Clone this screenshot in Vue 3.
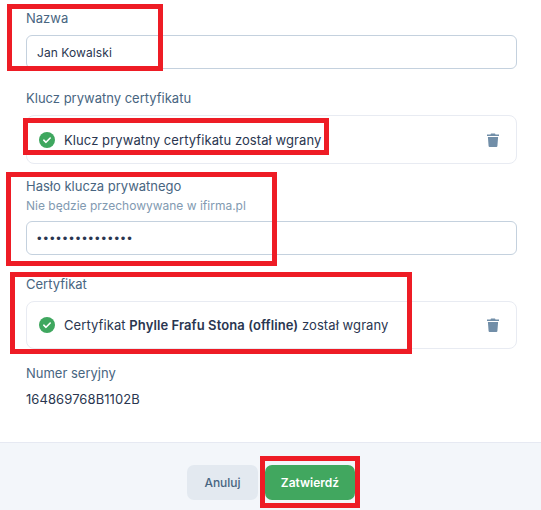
<script setup>
const marks = [
  { key: 'a', left: 7, top: 4, width: 156, height: 67 },
  { key: 'b', left: 23, top: 118, width: 306, height: 37 },
  { key: 'c', left: 6, top: 172, width: 271, height: 94 },
  { key: 'd', left: 10, top: 272, width: 402, height: 82 },
  { key: 'e', left: 260, top: 456, width: 100, height: 52 }
]
const markStyle = (m) => ({
  left: m.left + 'px',
  top: m.top + 'px',
  width: m.width + 'px',
  height: m.height + 'px'
})
</script>

<template>
  <div class="page">
    <div class="form">
      <div class="field f-name">
        <label class="label">Nazwa</label>
        <div class="input">Jan Kowalski</div>
      </div>
      <div class="field f-key">
        <label class="label">Klucz prywatny certyfikatu</label>
        <div class="file">
          <svg class="check" viewBox="0 0 16 16" width="16" height="16">
            <circle cx="8" cy="8" r="8" fill="#3fa75f" />
            <path d="M4.8 8.2l2.2 2.1 4.2-4.3" fill="none" stroke="#fff" stroke-width="1.6" stroke-linecap="round" stroke-linejoin="round" />
          </svg>
          <span class="file-text">Klucz prywatny certyfikatu został wgrany</span>
          <svg class="trash" viewBox="0 0 12 14" width="12" height="14">
            <path d="M4 .6h4l.5.9H12v1.6H0V1.500h3.500z" fill="#718ea8" />
            <path d="M.9 4.100h10.200l-.7 8.900a1 1 0 0 1-1 .9H2.600a1 1 0 0 1-1-.9z" fill="#718ea8" />
          </svg>
        </div>
      </div>
      <div class="field f-pass">
        <label class="label">Hasło klucza prywatnego</label>
        <div class="hint">Nie będzie przechowywane w ifirma.pl</div>
        <div class="input dots">•••••••••••••••</div>
      </div>
      <div class="field f-cert">
        <label class="label">Certyfikat</label>
        <div class="file">
          <svg class="check" viewBox="0 0 16 16" width="16" height="16">
            <circle cx="8" cy="8" r="8" fill="#3fa75f" />
            <path d="M4.8 8.2l2.2 2.1 4.200-4.300" fill="none" stroke="#fff" stroke-width="1.6" stroke-linecap="round" stroke-linejoin="round" />
          </svg>
          <span class="file-text">Certyfikat <b>Phylle Frafu Stona (offline)</b> został wgrany</span>
          <svg class="trash" viewBox="0 0 12 14" width="12" height="14">
            <path d="M4 .6h4l.5.9H12v1.600H0V1.500h3.500z" fill="#718ea8" />
            <path d="M.9 4.100h10.200l-.7 8.900a1 1 0 0 1-1 .9H2.600a1 1 0 0 1-1-.9z" fill="#718ea8" />
          </svg>
        </div>
      </div>
      <div class="field f-serial">
        <label class="label">Numer seryjny</label>
        <div class="value">164869768B1102B</div>
      </div>
    </div>
    <div class="footer">
      <button class="btn cancel" type="button">Anuluj</button>
      <button class="btn submit" type="button">Zatwierdź</button>
    </div>
    <div v-for="m in marks" :key="m.key" class="mark" :style="markStyle(m)"></div>
  </div>
</template>

<style scoped>
.page {
  position: relative;
  width: 541px;
  height: 510px;
  overflow: hidden;
  background: #fff;
  font-family: Inter, "Liberation Sans", sans-serif;
  font-size: 13px;
  color: #2a3650;
  display: flex;
  flex-direction: column;
}
.form {
  flex: 1;
  padding: 10px 24px 0 26px;
  display: flex;
  flex-direction: column;
}
.field {
  display: flex;
  flex-direction: column;
}
.label {
  font-size: 13px;
  line-height: 16px;
  color: #486581;
}
.f-name .label { margin-bottom: 9px; }
.f-key { margin-top: 21px; }
.f-key .label { margin-bottom: 9px; }
.f-pass { margin-top: 14px; }
.f-cert { margin-top: 21px; }
.f-cert .label { margin-bottom: 9px; }
.f-cert .file { height: 48px; }
.f-serial { margin-top: 16px; }
.hint {
  font-size: 12px;
  line-height: 16px;
  margin-top: 4px;
  margin-bottom: 7px;
  color: #829ab1;
}
.input {
  height: 34px;
  box-sizing: border-box;
  border: 1px solid #c4d1de;
  border-radius: 6px;
  padding: 0 10px;
  display: flex;
  align-items: center;
  font-size: 12px;
  letter-spacing: 0.08px;
}
.dots {
  font-size: 13px;
  letter-spacing: 1.9px;
  font-family: "Liberation Sans", sans-serif;
}
.file {
  height: 49px;
  box-sizing: border-box;
  border: 1px solid #e8ebf2;
  border-radius: 8px;
  padding: 0 17px 0 13px;
  display: flex;
  align-items: center;
}
.check { flex: none; margin-right: 9px; margin-left: -1px; }
.file-text {
  flex: 1;
  font-size: 13px;
  letter-spacing: 0.08px;
  white-space: nowrap;
}
.file-text b { font-weight: 600; }
.trash { flex: none; }
.value {
  margin-top: 10px;
  font-size: 13px;
  letter-spacing: 0.08px;
  line-height: 16px;
}
.footer {
  height: 68px;
  box-sizing: border-box;
  border-top: 1px solid #e6e9f2;
  background: #f3f6fa;
  padding: 22px 0 0 187px;
  display: flex;
  align-items: flex-start;
  gap: 7px;
}
.btn {
  height: 35px;
  border: none;
  border-radius: 7px;
  font-family: inherit;
  font-size: 12px;
  font-weight: 600;
  padding: 0;
}
.cancel {
  width: 71px;
  background: #e3e9f0;
  color: #486581;
  font-weight: 500;
}
.submit {
  width: 90px;
  background: #41a75f;
  color: #fff;
}
.mark {
  position: absolute;
  box-sizing: border-box;
  border: 5px solid #ee1c25;
  pointer-events: none;
}
</style>
